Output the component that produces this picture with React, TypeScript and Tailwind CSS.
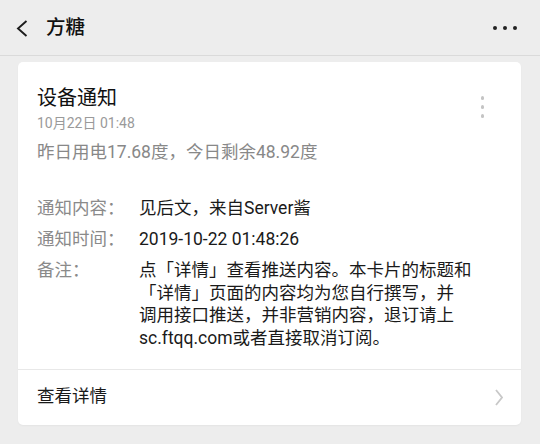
const rows = [
  { label: "通知内容：", lines: ["见后文，来自Server酱"] },
  { label: "通知时间：", lines: ["2019-10-22 01:48:26"] },
  {
    label: "备注：",
    lines: [
      "点「详情」查看推送内容。本卡片的标题和",
      "「详情」页面的内容均为您自行撰写，并",
      "调用接口推送，并非营销内容，退订请上",
      "sc.ftqq.com或者直接取消订阅。",
    ],
  },
];

const App = () => {
  return (
    <div className="w-[540px] h-[444px] bg-[#ededed] overflow-hidden font-['Roboto','Noto_Sans_CJK_SC',sans-serif]">
      <header className="h-[56px] border-b border-[#dadada] flex items-center justify-between pl-[16px] pr-[23px]">
        <div className="flex items-center">
          <svg width="12" height="17" viewBox="0 0 12 17" className="mt-[2px]">
            <polyline
              points="10.5,1 2,8.5 10.5,16"
              fill="none"
              stroke="#1c1c1c"
              strokeWidth="1.9"
              strokeLinejoin="miter"
            />
          </svg>
          <span className="ml-[18px] text-[19.5px] leading-[28px] text-[#111] font-medium">方糖</span>
        </div>
        <div className="flex items-center gap-[6px]">
          <span className="w-[4px] h-[4px] rounded-full bg-[#222]" />
          <span className="w-[4px] h-[4px] rounded-full bg-[#222]" />
          <span className="w-[4px] h-[4px] rounded-full bg-[#222]" />
        </div>
      </header>

      <div className="mx-[18px] mt-[6px] w-[503px] bg-white rounded-[5px] shadow-[0_1px_2px_rgba(0,0,0,0.04)]">
        <div className="pt-[22px] pl-[19px] pr-[37px] pb-[20px]">
          <div className="flex justify-between items-start h-[28px]">
            <div className="text-[20px] leading-[28px] text-[#111]">设备通知</div>
            <div className="flex flex-col items-center gap-[5.5px] mt-[12px]">
              <span className="w-[3.5px] h-[3.5px] rounded-full bg-[#c4c4c4]" />
              <span className="w-[3.5px] h-[3.5px] rounded-full bg-[#c4c4c4]" />
              <span className="w-[3.5px] h-[3.5px] rounded-full bg-[#c4c4c4]" />
            </div>
          </div>
          <div className="text-[14px] leading-[22px] text-[#9a9a9a]">10月22日 01:48</div>
          <div className="mt-[6px] text-[17.5px] leading-[24px] text-[#888]">
            昨日用电17.68度，今日剩余48.92度
          </div>

          <div className="mt-[33px] flex flex-col gap-[8.5px] text-[17.5px] leading-[22.5px]">
            {rows.map((r) => (
              <div key={r.label} className="flex">
                <div className="w-[102px] shrink-0 text-[#8a8a8a]">{r.label}</div>
                <div className="text-[#1a1a1a] whitespace-nowrap">
                  {r.lines.map((l) => (
                    <div key={l}>{l}</div>
                  ))}
                </div>
              </div>
            ))}
          </div>
        </div>

        <div className="border-t border-[#e8e8e8] h-[56px] flex items-center justify-between pl-[19px] pr-[18px]">
          <span className="text-[17.5px] leading-[24px] text-[#1a1a1a] -mt-[3px]">查看详情</span>
          <svg width="8" height="17" viewBox="0 0 8 17">
            <polyline
              points="1,1 7,8.5 1,16"
              fill="none"
              stroke="#c8c8c8"
              strokeWidth="1.8"
            />
          </svg>
        </div>
      </div>
    </div>
  );
};

export default App;
